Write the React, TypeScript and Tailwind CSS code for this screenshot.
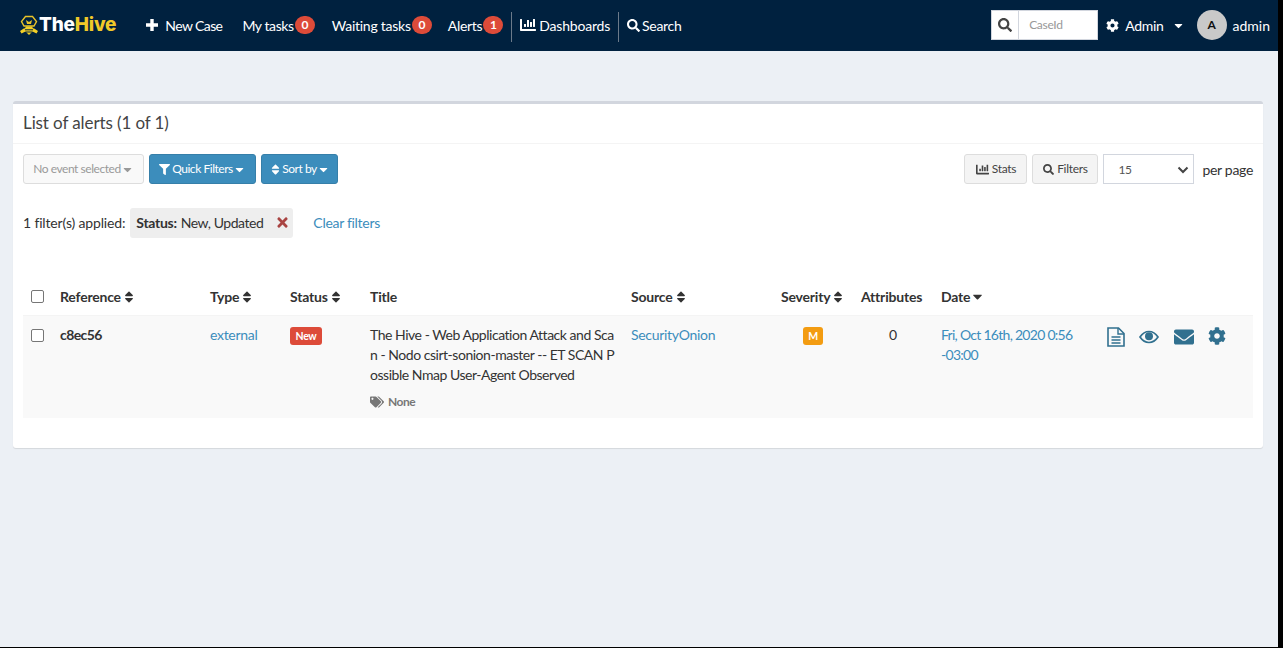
import React from "react";
import { FaChartBar, FaSearch, FaCog, FaFilter, FaSort, FaCaretDown, FaTimes, FaTags, FaEnvelope } from "react-icons/fa";

const Badge = ({ n }: { n: number }) => (
  <span className="ml-px inline-flex h-[18px] w-5 items-center justify-center rounded-full bg-[#dd4b39] text-xs font-bold text-white">{n}</span>
);

const NavItem = ({ children, className = "" }: { children: React.ReactNode; className?: string }) => (
  <a className={"flex h-full items-center text-white " + className}>{children}</a>
);

const Logo = () => (
  <div className="flex items-center">
    <svg width="20" height="21" viewBox="0 0 20 21">
      <path d="M6.5 1.5h7l4 5-2.5 4.5h-10L2.500 6.500z" fill="none" stroke="#e8c32a" strokeWidth="1.400" />
      <path d="M7 5l3 2 3-2-1 4H8z" fill="#e8c32a" />
      <path d="M7 11.500h6l2 3.500-5 5-5-5z" fill="#f2cf27" />
      <path d="M5.500 13l-4.500 3 1.500 2.500 4-2zM14.500 13l4.500 3-1.500 2.500-4-2z" fill="#f2cf27" />
      <path d="M6 14.800h8M7 17h6" stroke="#00213f" strokeWidth="1" />
    </svg>
    <span className="font-['Inter',sans-serif] text-[19px] font-extrabold tracking-[-0.2px] text-white">The</span>
    <span className="font-['Inter',sans-serif] text-[19px] font-extrabold tracking-[-0.2px] text-[#f0c929]">Hive</span>
  </div>
);

const SortHeader = ({ label, className = "" }: { label: string; className?: string }) => (
  <div className={"flex items-center font-bold " + className}>
    {label}
    <FaSort className="ml-px text-[14px]" />
  </div>
);

const Caret = ({ className = "" }: { className?: string }) => <FaCaretDown className={"text-[13px] " + className} />;

const FileIcon = () => (
  <svg width="18" height="20" viewBox="0 0 18 20" fill="none" stroke="#31708f">
    <path d="M1 1h10.500L17 6.500V19H1z" strokeWidth="1.600" />
    <path d="M11 1v6h6" strokeWidth="1.400" />
    <path d="M4.500 10h9M4.500 13h9M4.500 16h9" strokeWidth="1.500" />
  </svg>
);

const EyeIcon = () => (
  <svg width="20" height="14" viewBox="0 0 20 14">
    <path d="M1 7c2.500-3.700 5.500-5.500 9-5.500S16.500 3.300 19 7c-2.500 3.700-5.500 5.500-9 5.500S3.500 10.700 1 7z" fill="none" stroke="#31708f" strokeWidth="1.700" />
    <circle cx="10" cy="6.300" r="4" fill="#31708f" />
  </svg>
);

const PlusIcon = () => (
  <svg width="12" height="12" viewBox="0 0 12 12" className="mr-[7px]">
    <path d="M4.300 0h3.400v4.300H12v3.400H7.700V12H4.300V7.700H0V4.300h4.300z" fill="#fff" />
  </svg>
);

export default function App() {
  return (
    <div className="flex h-[648px] w-[1283px] flex-col overflow-hidden bg-black font-['Lato','Liberation_Sans',sans-serif] text-[14px] tracking-[-0.3px] text-[#333]">
      <div className="flex h-[647px] w-[1278px] flex-col bg-[#ecf0f5]">
        <header className="flex h-[51px] items-center bg-[#00213f] pb-px pl-[19px] pr-[8px]">
          <Logo />
          <NavItem className="ml-[30px]"><PlusIcon /><span className="tracking-[-0.6px]">New Case</span></NavItem>
          <NavItem className="ml-[20px]"><span className="tracking-[-0.4px]">My tasks</span><Badge n={0} /></NavItem>
          <NavItem className="ml-[17px]"><span className="tracking-[-0.25px]">Waiting tasks</span><Badge n={0} /></NavItem>
          <NavItem className="ml-[16px]">Alerts<Badge n={1} /></NavItem>
          <span className="ml-[8px] mt-[4px] h-[30px] w-px bg-[#6b7a8a]" />
          <NavItem className="ml-[8px]"><FaChartBar className="mr-[3px] text-[16px]" /><span className="tracking-[-0.2px]">Dashboards</span></NavItem>
          <span className="ml-2 mt-[4px] h-[30px] w-px bg-[#6b7a8a]" />
          <NavItem className="ml-2"><FaSearch className="mr-[2px] text-[13px]" />Search</NavItem>
          <div className="ml-auto flex h-[30px] w-[107px] items-center border border-[#d2d6de] bg-white">
            <div className="flex h-full w-[27px] items-center justify-center border-r border-[#d2d6de]">
              <FaSearch className="text-[14px] text-[#444]" />
            </div>
            <span className="ml-2.5 text-[12px] text-[#999]">CaseId</span>
          </div>
          <NavItem className="ml-2"><FaCog className="mr-[6px] text-[13px]" />Admin<Caret className="ml-[8px]" /></NavItem>
          <div className="ml-[12px] flex h-[30px] w-[30px] items-center justify-center rounded-full bg-[#c9c9c9] text-[12px] font-bold text-[#111]">A</div>
          <span className="ml-1.5 tracking-normal text-white">admin</span>
        </header>

        <main className="mx-[13px] mt-[50px] h-[347px] w-[1250px] rounded-[3px] border-t-[3px] border-[#d2d6de] bg-white shadow-[0_1px_1px_rgba(0,0,0,0.1)]">
          <div className="flex h-[40px] items-center border-b border-[#f4f4f4] pb-[2px] pl-[10px] text-[17px] tracking-[-0.1px] text-[#444]">List of alerts (1 of 1)</div>

          <div className="flex items-center justify-between px-[10px] pt-[10px]">
            <div className="flex gap-[5px] tracking-[-0.45px]">
              <button className="flex h-[30px] w-[121px] items-center justify-center rounded-[3px] border border-[#ddd] bg-[#f9f9f9] text-[12px] text-[#999]">No event selected<Caret /></button>
              <button className="flex h-[30px] w-[107px] items-center justify-center rounded-[3px] border border-[#367fa9] bg-[#3c8dbc] text-[12px] text-white"><FaFilter className="mr-[2px] text-[11px]" />Quick Filters<Caret /></button>
              <button className="flex h-[30px] w-[77px] items-center justify-center rounded-[3px] border border-[#367fa9] bg-[#3c8dbc] text-[12px] text-white"><FaSort className="text-[13px]" />Sort by<Caret /></button>
            </div>
            <div className="flex items-center gap-[5px]">
              <button className="flex h-[30px] w-[63px] items-center justify-center rounded-[3px] border border-[#ddd] bg-[#f4f4f4] text-[12px] text-[#444]"><FaChartBar className="mr-[3px] text-[13px]" />Stats</button>
              <button className="flex h-[30px] w-[66px] items-center justify-center rounded-[3px] border border-[#ddd] bg-[#f4f4f4] text-[12px] text-[#444]"><FaSearch className="mr-[3px] text-[11px]" />Filters</button>
              <div className="flex h-[30px] w-[91px] items-center justify-between border border-[#d2d6de] bg-white pl-[14px] pr-[4px] pt-px text-[12px] text-[#555]">
                15
                <svg width="12" height="8" viewBox="0 0 12 8"><path d="M1.500 1.500 6 6l4.500-4.500" fill="none" stroke="#444" strokeWidth="2" /></svg>
              </div>
              <span className="ml-[3px]">per page</span>
            </div>
          </div>

          <div className="flex items-center px-[10px] pt-[24px]">
            <span className="mb-[2px] tracking-[-0.15px]">1 filter(s) applied:</span>
            <div className="ml-[5px] flex h-[30px] w-[163px] items-center rounded-[3px] bg-[#eee] pb-[2px] pl-[6px]">
              <b>Status:</b><span className="ml-[4px] tracking-[-0.45px]">New, Updated</span>
              <FaTimes className="ml-auto mr-[3px] text-[15px] text-[#a94442]" />
            </div>
            <a className="mb-[2px] ml-5 text-[#3c8dbc]">Clear filters</a>
          </div>

          <div className="mx-[10px] mt-[40px] flex h-[38px] items-center border-b border-[#f4f4f4] tracking-[-0.2px]">
            <div className="flex w-[37px] justify-start pl-[8px]"><span className="block h-[13px] w-[13px] rounded-[2px] border border-[#767676] bg-white" /></div>
            <SortHeader label="Reference" className="w-[150px]" />
            <SortHeader label="Type" className="w-[80px]" />
            <SortHeader label="Status" className="w-[80px]" />
            <div className="w-[261px] font-bold">Title</div>
            <SortHeader label="Source" className="w-[150px]" />
            <SortHeader label="Severity" className="w-[80px]" />
            <div className="w-[80px] font-bold">Attributes</div>
            <div className="flex items-center font-bold">Date<FaCaretDown className="text-[15px]" /></div>
          </div>

          <div className="mx-[10px] flex h-[102px] bg-[#f9f9f9] pt-[9px] leading-[20px]">
            <div className="w-[37px] pl-[8px] pt-[4px]"><span className="block h-[13px] w-[13px] rounded-[2px] border border-[#767676] bg-white" /></div>
            <div className="w-[150px] font-bold tracking-[-0.6px]">c8ec56</div>
            <a className="w-[80px] text-[#3c8dbc]">external</a>
            <div className="w-[80px] pt-[2px]"><span className="flex h-[18px] w-[32px] items-center justify-center rounded-[3px] bg-[#dd4b39] text-[10.500px] font-bold text-white">New</span></div>
            <div className="w-[261px] whitespace-nowrap tracking-[-0.47px]">
              <div>The Hive - Web Application Attack and Sca</div>
              <div>n - Nodo csirt-sonion-master -- ET SCAN P</div>
              <div>ossible Nmap User-Agent Observed</div>
              <div className="mt-[7px] flex items-center text-[12px] font-bold text-[#777]"><FaTags className="mr-[4px] text-[14px]" />None</div>
            </div>
            <a className="w-[150px] text-[#3c8dbc]">SecurityOnion</a>
            <div className="w-[80px] pl-[22px] pt-[2px]"><span className="flex h-[18px] w-5 items-center justify-center rounded-[3px] bg-[#f39c12] text-[10.500px] font-bold text-white">M</span></div>
            <div className="w-[80px] pl-[28px]">0</div>
            <a className="w-[166px] whitespace-nowrap tracking-[-0.72px] text-[#3c8dbc]">
              <div>Fri, Oct 16th, 2020 0:56</div>
              <div>-03:00</div>
            </a>
            <div className="flex items-start pt-[2px] text-[#31708f]">
              <FileIcon />
              <span className="ml-[14px] mt-[3px]"><EyeIcon /></span>
              <FaEnvelope className="ml-[15px] text-[20px]" />
              <FaCog className="ml-[14px] text-[18px]" />
            </div>
          </div>
        </main>
      </div>
    </div>
  );
}
